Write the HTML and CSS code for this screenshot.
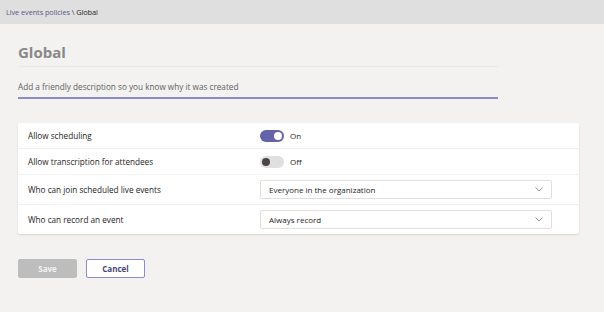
FILE: index.html
```html
<!DOCTYPE html>
<html>
<head>
<meta charset="utf-8">
<link rel="stylesheet" href="styles.css">
</head>
<body>
<div class="topbar"><span class="crumb-link">Live events policies</span> <span class="crumb-sep">\</span> <span class="crumb-current">Global</span></div>
<div class="main">
  <div class="title-row"><h1 class="title">Global</h1></div>
  <div class="desc">Add a friendly description so you know why it was created</div>
  <div class="card">
    <div class="row">
      <div class="label">Allow scheduling</div>
      <div class="control"><span class="toggle on"><span class="knob"></span></span><span class="toggle-text">On</span></div>
    </div>
    <div class="row">
      <div class="label">Allow transcription for attendees</div>
      <div class="control"><span class="toggle off"><span class="knob"></span></span><span class="toggle-text">Off</span></div>
    </div>
    <div class="row tall">
      <div class="label">Who can join scheduled live events</div>
      <div class="control"><div class="select"><span>Everyone in the organization</span><svg class="chev" width="8" height="5" viewBox="0 0 8 5"><path d="M0.5 0.5 L4 4 L7.5 0.5" fill="none" stroke="#8a8886" stroke-width="0.9"/></svg></div></div>
    </div>
    <div class="row tall last">
      <div class="label">Who can record an event</div>
      <div class="control"><div class="select"><span>Always record</span><svg class="chev" width="8" height="5" viewBox="0 0 8 5"><path d="M0.5 0.5 L4 4 L7.5 0.5" fill="none" stroke="#8a8886" stroke-width="0.9"/></svg></div></div>
    </div>
  </div>
  <div class="buttons">
    <button class="btn save">Save</button>
    <button class="btn cancel">Cancel</button>
  </div>
</div>
</body>
</html>
```
FILE: styles.css
```css
* { box-sizing: border-box; }
html, body { margin: 0; padding: 0; }
body {
  background: #f3f2f1;
  font-family: "Open Sans", "Noto Sans", sans-serif;
  color: #252423;
  width: 604px;
  height: 312px;
  overflow: hidden;
}
.topbar {
  height: 24px;
  background: #dfdfdf;
  padding-left: 6px;
  font-size: 7.4px;
  line-height: 24px;
  letter-spacing: -0.1px;
}
.crumb-link { color: #5b5a84; }
.crumb-sep { color: #484644; }
.crumb-current { color: #252423; }
.main { padding: 0 18px; }
.title-row {
  width: 480px;
  height: 43px;
  border-bottom: 1px solid #ebe9e8;
  padding-top: 18px;
}
.title {
  margin: 0;
  font-size: 15px;
  line-height: 20px;
  font-weight: 700;
  color: #8a8886;
}
.desc {
  width: 480px;
  height: 32px;
  padding-top: 14px;
  font-size: 8.2px;
  line-height: 12px;
  color: #616161;
  border-bottom: 2px solid #8b8cc7;
}
.card {
  margin-top: 24px;
  width: 561px;
  background: #fff;
  border-radius: 2px;
  box-shadow: 0 1px 2px rgba(0,0,0,0.12);
}
.row {
  display: flex;
  align-items: center;
  height: 26px;
  padding: 0 27px 0 10px;
  border-bottom: 1px solid #f1f1f1;
}
.row.tall { height: 30px; }
.row.last { height: 29px; border-bottom: none; }
.label {
  width: 232px;
  font-size: 8.2px;
  color: #252423;
}
.control {
  flex: 1;
  display: flex;
  align-items: center;
}
.toggle {
  position: relative;
  display: inline-block;
  width: 24px;
  height: 12px;
  border-radius: 6px;
}
.toggle.on { background: #6264a7; }
.toggle.off { background: #e1dfdd; }
.knob {
  position: absolute;
  top: 2px;
  width: 8px;
  height: 8px;
  border-radius: 50%;
}
.toggle.on .knob { right: 2px; background: #fff; }
.toggle.off .knob { left: 2px; background: #484644; }
.toggle-text {
  margin-left: 6px;
  font-size: 8px;
  color: #252423;
}
.select {
  width: 292px;
  height: 19px;
  border: 1px solid #e1dfdd;
  border-radius: 2px;
  display: flex;
  align-items: center;
  justify-content: space-between;
  padding: 0 8px 0 8px;
  font-size: 8px;
  color: #252423;
}
.chev { display: block; }
.buttons {
  margin-top: 25px;
  display: flex;
  gap: 9px;
}
.btn {
  width: 59px;
  height: 19px;
  border-radius: 2px;
  font-family: "Open Sans", "Noto Sans", sans-serif;
  font-size: 8px;
  font-weight: 700;
  padding: 0;
}
.btn.save {
  background: #bdbdbd;
  border: 1px solid #bdbdbd;
  color: #f3f2f1;
}
.btn.cancel {
  background: #fff;
  border: 1px solid #8b8cc7;
  color: #464775;
}
```
